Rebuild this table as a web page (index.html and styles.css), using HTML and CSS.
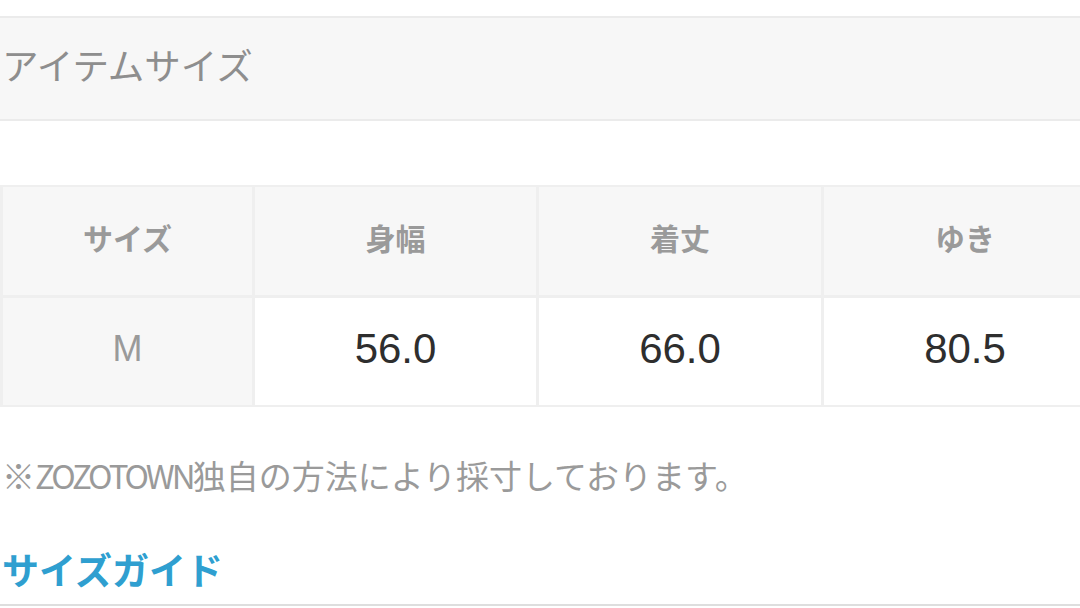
FILE: index.html
```html
<!DOCTYPE html>
<html lang="ja">
<head>
<meta charset="utf-8">
<link rel="stylesheet" href="styles.css">
</head>
<body>
<div class="page">
  <div class="section-head">アイテムサイズ</div>
  <div class="size-table">
    <div class="cell head">サイズ</div>
    <div class="cell head">身幅</div>
    <div class="cell head">着丈</div>
    <div class="cell head">ゆき</div>
    <div class="cell label">M</div>
    <div class="cell value">56.0</div>
    <div class="cell value">66.0</div>
    <div class="cell value">80.5</div>
  </div>
  <p class="note">※<span class="latin">ZOZOTOWN</span>独自の方法により採寸しております。</p>
  <div class="guide"><a class="guide-link">サイズガイド</a></div>
</div>
</body>
</html>
```

FILE: styles.css
```css
html, body {
  margin: 0;
  padding: 0;
  background: #ffffff;
  overflow: hidden;
}
.page {
  width: 1080px;
  height: 608px;
  overflow: hidden;
  padding-top: 16px;
  box-sizing: border-box;
  font-family: "Noto Sans CJK JP", "Noto Sans", sans-serif;
}
.section-head {
  background: #f7f7f7;
  border-top: 2px solid #ebebeb;
  border-bottom: 2px solid #ebebeb;
  display: flex;
  align-items: center;
  padding-left: 2px;
  padding-bottom: 6px;
  box-sizing: border-box;
  height: 105px;
  font-size: 36.5px;
  color: #8e8e8e;
  line-height: 1;
}
.size-table {
  margin-top: 64px;
  width: 1140px;
  display: grid;
  grid-template-columns: 249px 281px 282px 282px;
  grid-template-rows: 108px 107px;
  gap: 3px;
  background: #efefef;
  border: 2px solid #efefef;
  border-left-width: 3px;
}
.cell {
  display: flex;
  align-items: center;
  justify-content: center;
  background: #f7f7f7;
  box-sizing: border-box;
}
.head {
  font-size: 30px;
  font-weight: 700;
  color: #9a9a9a;
  padding-bottom: 8px;
}
.label {
  font-family: "Liberation Sans", Arial, sans-serif;
  font-size: 36px;
  color: #9a9a9a;
  padding-bottom: 6px;
}
.value {
  background: #ffffff;
  font-family: "Liberation Sans", Arial, sans-serif;
  font-size: 42px;
  color: #2e2e2e;
  padding-bottom: 6px;
}
.note {
  margin: 44px 0 0 0;
  padding-left: 2px;
  font-size: 33px;
  line-height: 48px;
  color: #9a9a9a;
  white-space: nowrap;
}
.latin {
  letter-spacing: -3px;
}
.guide {
  margin-top: 44px;
  padding-left: 2px;
  padding-top: 2px;
  height: 63px;
  box-sizing: border-box;
  border-bottom: 2px solid #dedede;
  font-size: 37px;
  line-height: 48px;
}
.guide-link {
  font-weight: 700;
  color: #2f9fd0;
}
```
